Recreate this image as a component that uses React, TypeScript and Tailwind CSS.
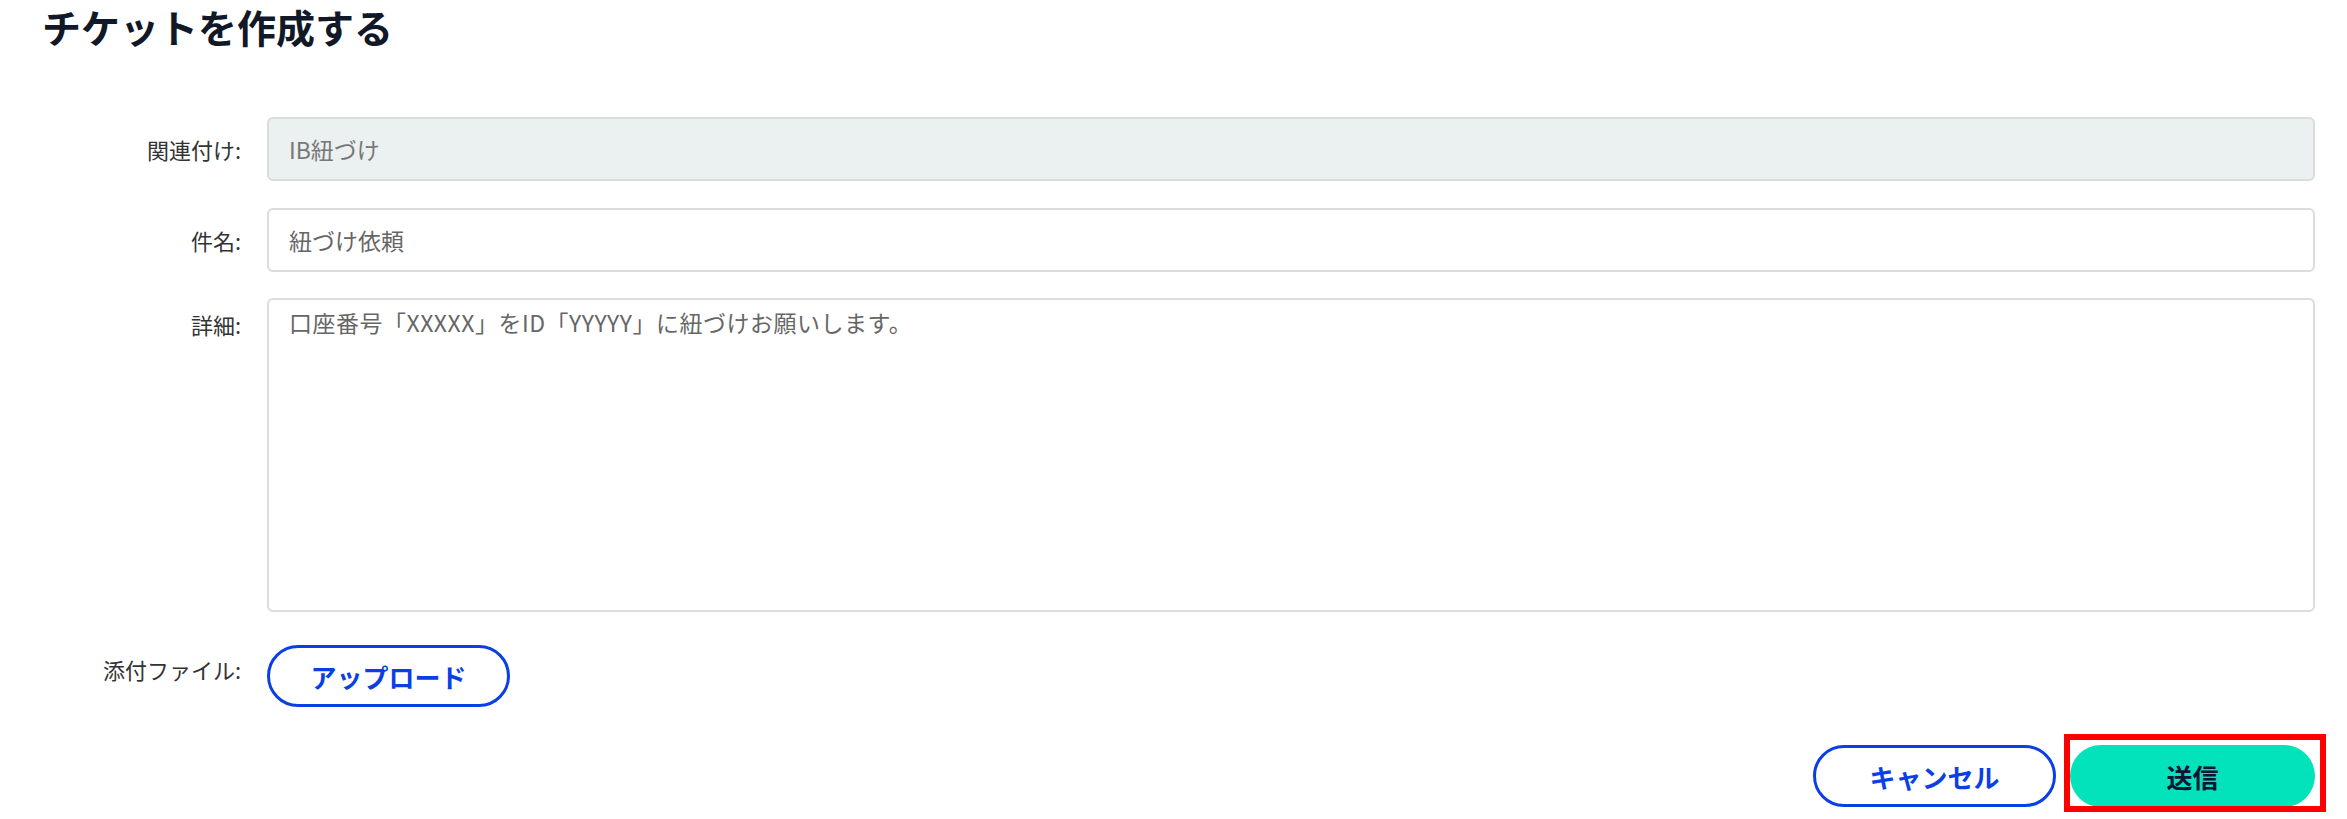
import { useState } from "react"

const font = { fontFamily: '"Noto Sans CJK JP", "Noto Sans", sans-serif' }

function Label({ children, pt }: { children: React.ReactNode; pt?: string }) {
  return (
    <div className={`text-right text-[22px] text-[#333333] ${pt ?? "self-center"}`}>
      {children}
    </div>
  )
}

export default function App() {
  const [subject, setSubject] = useState("紐づけ依頼")
  const [detail, setDetail] = useState("口座番号「XXXXX」をID「YYYYY」に紐づけお願いします。")

  return (
    <div className="w-[2347px] h-[819px] bg-white pr-[32px] pt-[6px]" style={font}>
      {/* Title */}
      <h1 className="ml-[42px] text-[39px] leading-[40px] font-bold text-[#111827]">チケットを作成する</h1>

      {/* Form */}
      <div className="mt-[71px] grid grid-cols-[241px_1fr] gap-x-[26px]">
        <Label>関連付け:</Label>
        <input
          disabled
          value="IB紐づけ"
          className="h-[64px] w-full rounded-[6px] border-2 border-[#dcdcdc] bg-[#ebf0f0] px-[20px] text-[23px] text-[#777777]"
        />

        <div className="col-span-2 h-[27px]" />

        <Label>件名:</Label>
        <input
          value={subject}
          onChange={(e) => setSubject(e.target.value)}
          className="h-[64px] w-full rounded-[6px] border-2 border-[#dcdcdc] bg-white px-[20px] text-[23px] text-[#666666] outline-none"
        />

        <div className="col-span-2 h-[26px]" />

        <Label pt="pt-[10px]">詳細:</Label>
        <textarea
          value={detail}
          onChange={(e) => setDetail(e.target.value)}
          className="h-[314px] w-full resize-none rounded-[6px] border-2 border-[#dcdcdc] bg-white px-[20px] py-[5px] text-[23px] leading-[34px] tracking-[0.5px] text-[#666666] outline-none"
        />

        <div className="col-span-2 h-[33px]" />

        <Label pt="pt-[8px]">添付ファイル:</Label>
        <div>
          <button className="h-[62px] w-[243px] rounded-full border-[3px] border-[#0b3fe6] bg-white text-[26px] font-bold text-[#0b3fe6]">
            アップロード
          </button>
        </div>
      </div>

      {/* Actions */}
      <div className="mt-[38px] flex justify-end gap-[14px]">
        <button className="h-[62px] w-[243px] rounded-full border-[3px] border-[#0b3fe6] bg-white text-[26px] font-bold text-[#0b3fe6]">
          キャンセル
        </button>
        <div className="relative">
          <button className="h-[62px] w-[245px] rounded-full bg-[#02e3bc] text-[26px] font-bold text-[#0a1433]">
            送信
          </button>
          {/* highlight annotation */}
          <div className="pointer-events-none absolute -left-[6px] -right-[11px] -top-[11px] -bottom-[5px] border-[6px] border-[#ff0000]" />
        </div>
      </div>
    </div>
  )
}
